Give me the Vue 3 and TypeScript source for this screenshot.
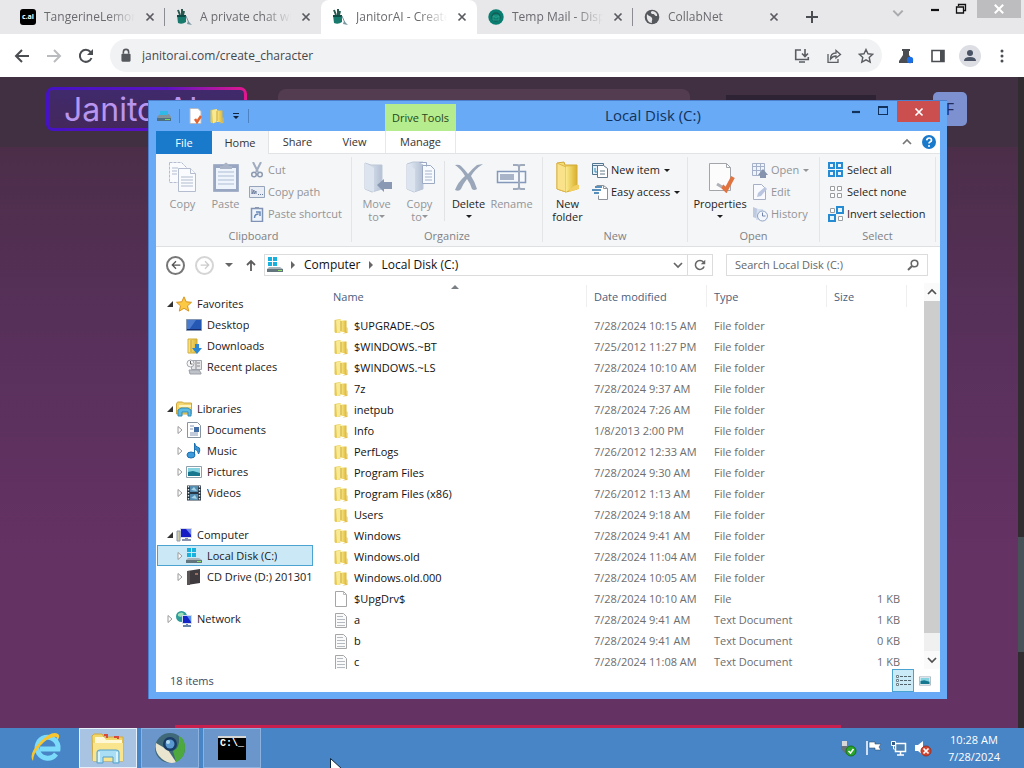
<script setup lang="ts">
import { ref } from 'vue'

interface Tab { title: string; icon: string; active?: boolean; line?: boolean }
interface NavItem { label: string; icon: string; level: number; arrow: 'open' | 'closed' | 'none'; gap?: boolean; selected?: boolean }
interface FileRow { name: string; date: string; type: string; size: string; icon: string }

const tabs: Tab[] = [
  { title: 'TangerineLemon', icon: 'cai', line: true },
  { title: 'A private chat with', icon: 'janitor' },
  { title: 'JanitorAI - Create', icon: 'janitor', active: true },
  { title: 'Temp Mail - Dispo', icon: 'mail', line: true },
  { title: 'CollabNet', icon: 'globe' },
]

const nav: NavItem[] = [
  { label: 'Favorites', icon: 'star', level: 0, arrow: 'open' },
  { label: 'Desktop', icon: 'desktop', level: 1, arrow: 'none' },
  { label: 'Downloads', icon: 'downloads', level: 1, arrow: 'none' },
  { label: 'Recent places', icon: 'recent', level: 1, arrow: 'none' },
  { label: 'Libraries', icon: 'libraries', level: 0, arrow: 'open', gap: true },
  { label: 'Documents', icon: 'documents', level: 1, arrow: 'closed' },
  { label: 'Music', icon: 'music', level: 1, arrow: 'closed' },
  { label: 'Pictures', icon: 'pictures', level: 1, arrow: 'closed' },
  { label: 'Videos', icon: 'videos', level: 1, arrow: 'closed' },
  { label: 'Computer', icon: 'computer', level: 0, arrow: 'open', gap: true },
  { label: 'Local Disk (C:)', icon: 'drive', level: 1, arrow: 'closed', selected: true },
  { label: 'CD Drive (D:) 201301', icon: 'cd', level: 1, arrow: 'closed' },
  { label: 'Network', icon: 'network', level: 0, arrow: 'closed', gap: true },
]

const folder = (name: string, date: string): FileRow => ({ name, date, type: 'File folder', size: '', icon: 'folder' })
const files: FileRow[] = [
  folder('$UPGRADE.~OS', '7/28/2024 10:15 AM'),
  folder('$WINDOWS.~BT', '7/25/2012 11:27 PM'),
  folder('$WINDOWS.~LS', '7/28/2024 10:10 AM'),
  folder('7z', '7/28/2024 9:37 AM'),
  folder('inetpub', '7/28/2024 7:26 AM'),
  folder('Info', '1/8/2013 2:00 PM'),
  folder('PerfLogs', '7/26/2012 12:33 AM'),
  folder('Program Files', '7/28/2024 9:30 AM'),
  folder('Program Files (x86)', '7/26/2012 1:13 AM'),
  folder('Users', '7/28/2024 9:18 AM'),
  folder('Windows', '7/28/2024 9:41 AM'),
  folder('Windows.old', '7/28/2024 11:04 AM'),
  folder('Windows.old.000', '7/28/2024 10:05 AM'),
  { name: '$UpgDrv$', date: '7/28/2024 10:10 AM', type: 'File', size: '1 KB', icon: 'file' },
  { name: 'a', date: '7/28/2024 9:41 AM', type: 'Text Document', size: '1 KB', icon: 'text' },
  { name: 'b', date: '7/28/2024 9:41 AM', type: 'Text Document', size: '0 KB', icon: 'text' },
  { name: 'c', date: '7/28/2024 11:08 AM', type: 'Text Document', size: '1 KB', icon: 'text' },
]

const apps = [
  { label: 'Internet Explorer', icon: 'ie', state: '' },
  { label: 'File Explorer', icon: 'explorer', state: 'current' },
  { label: 'Chromium', icon: 'chromium', state: 'running' },
  { label: 'Command Prompt', icon: 'cmd', state: 'running' },
]
const tray = ['usb', 'flag', 'lan', 'sound']

const url = ref('janitorai.com/create_character')
const search = ref('')
</script>

<template>
  <div class="screen">
    <svg class="sprite" aria-hidden="true">
      <defs>
        <linearGradient id="gFolder" x1="0" x2="1"><stop offset="0" stop-color="#fbe98c" /><stop offset="1" stop-color="#dcb532" /></linearGradient>
        <linearGradient id="gPale" x1="0" x2="1"><stop offset="0" stop-color="#e6edf5" /><stop offset="1" stop-color="#b3c0d4" /></linearGradient>
      </defs>
      <symbol id="x" viewBox="0 0 10 10"><path d="M1.5 1.5l7 7M8.5 1.5l-7 7" stroke="currentColor" stroke-width="1.7" /></symbol>
      <symbol id="janitor" viewBox="0 0 16 16"><path d="M1 6h9v7q-4 3-8 1z" fill="#187a6c" /><path d="M1 6h9v2H1z" fill="#0d4b47" /><path d="M2 1l2 5M6 0v6M8 2L7 6" stroke="#28584e" stroke-width="2" /><path d="M10 7l3 7" stroke="#7897a1" /><path d="M11 15l5 1-4-4z" fill="#7897a1" /></symbol>
      <symbol id="mail" viewBox="0 0 16 16"><circle cx="8" cy="8" r="7.700" fill="#087d70" /><circle cx="8" cy="8" r="4" fill="none" stroke="#155c58" stroke-width="1.500" /><path d="M5 7h6v4H5zM5 7l3 2 3-2" fill="none" stroke="#27a18b" /></symbol>
      <symbol id="globe" viewBox="0 0 16 16"><circle cx="8" cy="8" r="7.300" fill="#55585c" /><path d="M3 5c1 2 4 2 5 4s-1 3 0 5c-3 0-6-3-5-9zM8 2c-2 1-1 3 1 3s1 2 4 2c1-2-2-5-5-5z" fill="#e8e7ea" /></symbol>
      <symbol id="back" viewBox="0 0 16 16"><path d="M15 8H2M8 2L2 8l6 6" fill="none" stroke="currentColor" stroke-width="2" /></symbol>
      <symbol id="fwd" viewBox="0 0 16 16"><path d="M1 8h13M8 2l6 6-6 6" fill="none" stroke="currentColor" stroke-width="2" /></symbol>
      <symbol id="reload" viewBox="0 0 16 16"><path d="M13.500 10A6 6 0 1 1 12.500 4" fill="none" stroke="currentColor" stroke-width="2" /><path d="M15 1v6H9z" fill="currentColor" /></symbol>
      <symbol id="lock" viewBox="0 0 12 14"><rect x="2" y="5" width="8" height="7" rx="1" fill="#55585c" /><path d="M3.700 5V3.500a2.300 2.300 0 0 1 4.600 0V5" fill="none" stroke="#55585c" stroke-width="1.400" /></symbol>
      <symbol id="install" viewBox="0 0 16 16"><path d="M7 2H1.700v9.500h12.600V9M5 14h6M11 1v7M8 5.500l3 3 3-3" fill="none" stroke="#5a5d61" stroke-width="1.600" /></symbol>
      <symbol id="share" viewBox="0 0 16 16"><path d="M2 6v8.300h10V11M4.500 11c0-4 2-6 5.500-6V2.500L14.500 6.500 10 10V8c-3 0-4 1-5.500 3z" fill="none" stroke="#5a5d61" stroke-width="1.300" /></symbol>
      <symbol id="fav" viewBox="0 0 16 16"><path d="M8 1.500l2 4.300 4.700.5-3.500 3.200 1 4.700L8 11.800l-4.200 2.400 1-4.700L1.300 6.300 6 5.800z" fill="none" stroke="#5a5d61" stroke-width="1.400" /></symbol>
      <symbol id="flask" viewBox="0 0 16 16"><path d="M4 1h8v2h-1v4l4 6v2H1v-2l4-6V3H4z" fill="#4a4d52" /><circle cx="12" cy="12" r="3.200" fill="#1a6fe8" /></symbol>
      <symbol id="panel" viewBox="0 0 16 16"><path d="M2 2.500h12v11H2z" fill="none" stroke="#4a4d52" stroke-width="1.600" /><path d="M10 2h4v12h-4z" fill="#4a4d52" /></symbol>
      <symbol id="user" viewBox="0 0 22 22"><circle cx="11" cy="11" r="11" fill="#dcdee4" /><circle cx="11" cy="8" r="3" fill="#4a5364" /><path d="M5 16q0-4 6-4t6 4z" fill="#4a5364" /></symbol>
      <symbol id="dots" viewBox="0 0 16 16"><g fill="#4a4d52"><circle cx="8" cy="3" r="1.500" /><circle cx="8" cy="8" r="1.500" /><circle cx="8" cy="13" r="1.500" /></g></symbol>
      <symbol id="chev" viewBox="0 0 12 12"><path d="M2 4l4 4 4-4" fill="none" stroke="currentColor" stroke-width="1.700" /></symbol>
      <symbol id="min" viewBox="0 0 12 12"><path d="M2 7h8" stroke="currentColor" stroke-width="2.200" /></symbol>
      <symbol id="max" viewBox="0 0 12 12"><path d="M1 1h10v9H1zM2 3h8v6H2z" fill="currentColor" fill-rule="evenodd" /></symbol>
      <symbol id="restore" viewBox="0 0 12 12"><path d="M3.500 3V1.500h7v6H9M1.500 4h7v6h-7z" fill="none" stroke="currentColor" stroke-width="1.300" /></symbol>

      <symbol id="qdrive" viewBox="0 0 16 16"><path d="M1 9l3-3h9l2 3v4H1z" fill="#82939b" /><path d="M1 10h14v3H1z" fill="#4d7182" /><path d="M4 3h8v4H4z" fill="#30b9e6" /><path d="M9 11h5v1H9z" fill="#78d45b" /></symbol>
      <symbol id="drive" viewBox="0 0 16 16"><path d="M1 0h4v4H1zM6 0h4v4H6zM1 5h4v4H1zM6 5h4v4H6z" fill="#18b1de" /><path d="M2 10h11l3 2v3H0v-3z" fill="#a9b5bb" /><path d="M0 12h16v3H0z" fill="#63757d" /><path d="M11 13h4v1h-4z" fill="#8de35d" /></symbol>
      <symbol id="props" viewBox="0 0 16 16"><path d="M3 .5h8l3 3v12H3z" fill="#fff" stroke="#b5bcc6" /><path d="M8 11l2 3 4-6" fill="none" stroke="#df6632" stroke-width="2.500" /></symbol>
      <symbol id="folder" viewBox="0 0 16 16"><path d="M1.500 2l6-1v13.500l-5 .5-1-1z" fill="#e5c94f" /><path d="M3 2.500l5-1.500v12l-4 2.500z" fill="#f8e995" /><path d="M8 2.500h5.500V14H8z" fill="url(#gFolder)" /><path d="M8 3v10" stroke="#cba731" fill="none" /><path d="M13.500 9l1 1v5l-5 .5 4-2z" fill="#e3bf4b" /></symbol>
      <symbol id="file" viewBox="0 0 16 16"><path d="M2.500 .5h8l3 3v12h-11z" fill="#fff" stroke="#a6a6a6" /><path d="M10.500 .5v3h3" fill="none" stroke="#bbb" /></symbol>
      <symbol id="text" viewBox="0 0 16 16"><path d="M2.500 1.500h8l3 3v11h-11z" fill="#fafafa" stroke="#a6a6a6" /><path d="M4 4.500h6M4 7.500h8M4 10.500h8M4 13.500h8" stroke="#b4babf" /></symbol>
      <symbol id="star" viewBox="0 0 16 16"><path d="M8 .8l2.200 5 5.300.5-4 3.500 1.200 5.300L8 12.300l-4.700 2.800 1.200-5.300-4-3.500 5.300-.5z" fill="#fbc944" stroke="#d99420" /></symbol>
      <symbol id="desktop" viewBox="0 0 16 16"><path d="M.5 2.500h15v11H.5z" fill="#2557b5" stroke="#8496b2" /><path d="M1 3h9L3 13H1z" fill="#6493dc" opacity=".6" /><path d="M1 12h14v1H1z" fill="#162e71" /></symbol>
      <symbol id="downloads" viewBox="0 0 16 16"><path d="M2 1h9v14H2z" fill="url(#gFolder)" stroke="#d0ac3b" /><path d="M5 2v12" stroke="#c99f34" /><path d="M9 6h4v4h3l-5 6-5-6h3z" fill="#2b88d6" /></symbol>
      <symbol id="recent" viewBox="0 0 16 16"><path d="M5.500 1.500h10v9h-10z" fill="#e5e5e9" stroke="#a2a6ae" /><path d="M10 2v8M11 4h3M11 7h3" stroke="#888" /><circle cx="4.500" cy="4.500" r="3.500" fill="#f8f8fa" stroke="#a2a6ae" /><path d="M4.500 2v3h2" stroke="#666" fill="none" /><path d="M3 11h10l2 3v1H4z" fill="#bfc2c8" stroke="#9b9fa7" /></symbol>
      <symbol id="libraries" viewBox="0 0 16 16"><path d="M.5 3l1-2h5l1 1h8v11H.5z" fill="#f3d66d" stroke="#cda640" /><path d="M3 4h12v2H3z" fill="#fff3bf" /><path d="M2 15V9l3-2h7l3 2v6h-3v-4H6v4z" fill="#5bbbe5" stroke="#348bb5" /></symbol>
      <symbol id="documents" viewBox="0 0 16 16"><path d="M1.500 .5h10l3 3v12h-13z" fill="#fff" stroke="#8994a1" /><path d="M4 4h4M4 7h3M4 11h8M4 13h8" stroke="#8296b5" /><path d="M8 5h5v5H8z" fill="#416ca4" /></symbol>
      <symbol id="music" viewBox="0 0 16 16"><ellipse cx="5" cy="12" rx="4" ry="3" fill="#3d9adb" stroke="#1d70af" /><path d="M8.500 12V0q.5 4 5 5 1 3-1 6 0-4-4-5" fill="#3992d1" stroke="#1d70af" /></symbol>
      <symbol id="pictures" viewBox="0 0 16 16"><path d="M.5 2.500h15v11H.5z" fill="#fff" stroke="#8ca0ae" /><path d="M2 4h12v8H2z" fill="#85d2e0" /><path d="M2 8l5-1 7 2v3H2z" fill="#16778e" /></symbol>
      <symbol id="videos" viewBox="0 0 16 16"><path d="M1 .5h14v15H1z" fill="#293744" /><path d="M4 1h8v6H4zM4 9h8v6H4z" fill="#538eb2" /><path d="M2.500 1v15M13.500 1v15" stroke="#e4ecef" stroke-width="1.400" stroke-dasharray="1.500 1.500" /><path d="M5 5l3-3 3 4zM5 13l4-3 2 4z" fill="#a7d4e6" /></symbol>
      <symbol id="computer" viewBox="0 0 16 16"><path d="M4 1h12v10H4z" fill="#d7dbe7" /><path d="M5 2h10v8H5z" fill="#171bc4" /><path d="M10 2h5v6z" fill="#6f83f0" /><path d="M9 11h3v1h3v2H6v-2h3z" fill="#8890ac" /><path d="M1 4h3v10H1z" fill="#cfcba9" stroke="#8c99ac" /></symbol>
      <symbol id="cd" viewBox="0 0 16 16"><path d="M1 2l13-2v14L1 16z" fill="#3e3a3e" /><path d="M1 2h3v14H1z" fill="#5a5454" /><path d="M9 4h3v2H9z" fill="#9a7063" /></symbol>
      <symbol id="network" viewBox="0 0 16 16"><circle cx="5.500" cy="5.500" r="5.500" fill="#309c99" /><path d="M2 3q4-3 6 0l-3 3-3-1z" fill="#9ee0b9" /><path d="M6 4h10v9H6z" fill="#cfdbec" /><path d="M7 5h8v7H7z" fill="#1727c7" /><path d="M11 5h4v6z" fill="#5a91ed" /><path d="M10 13h2v1h3v2H7v-2h3z" fill="#6985a9" /></symbol>

      <symbol id="bCopy" viewBox="0 0 32 32"><g fill="#f9fbfe" stroke="#b3bdcf"><path d="M2.500 1.500h12l5 5v15h-17z" stroke-dasharray="3 1" /><path d="M11.500 7.500h12l5 5v18h-17z" /><path d="M23.500 7.500v5h5M14 16h12M14 19h12M14 22h12M14 25h12M5 7h6M5 10h5M5 13h5" /></g></symbol>
      <symbol id="bPaste" viewBox="0 0 32 32"><path d="M3.500 3.500h25v27h-25z" fill="#99a6c1" stroke="#a7b3ca" /><path d="M6 7h20v21H6z" fill="#eef4fc" /><path d="M10 5h3q3-7 6 0h3v3H10z" fill="#aab4c8" /><path d="M8 11h16M8 15h16M8 19h16M8 23h16" stroke="#aebbd2" /></symbol>
      <symbol id="bMove" viewBox="0 0 32 32"><path d="M4 2l6 2h11v24l-10 3-7-3z" fill="url(#gPale)" stroke="#bcc7d8" /><path d="M4 2l9 5v24l-9-3z" fill="#dce4ef" /><path d="M16 24l7-6v3h8v7h-8v3z" fill="#8a99b3" /></symbol>
      <symbol id="bCopyTo" viewBox="0 0 32 32"><path d="M3 3l6-2h10v27l-9 3-7-3z" fill="url(#gPale)" stroke="#bcc7d8" /><path d="M3 3l8 5v23l-8-3z" fill="#dce4ef" /><path d="M15.500 1.500h7v4M18.500 4.500h8l4 4v14h-12z" fill="#f7faff" stroke="#9ba9c3" /><path d="M21 10h7M21 13h7M21 16h7M21 19h7" stroke="#a7b4cb" /></symbol>
      <symbol id="bDelete" viewBox="0 0 32 32"><path d="M2 4q4-1 6 1 4 4 7 8 4-5 9-9l6-1Q22 8 18 15q4 6 6 13-3 2-5 0-2-6-5-10-4 5-6 10-2 3-6 1 3-8 10-14Q8 8 2 4z" fill="#9aa6b9" /></symbol>
      <symbol id="bRename" viewBox="0 0 32 32"><path d="M1.500 10.500h28v11h-28z" fill="#f5f8fc" stroke="#8398bb" stroke-width="1.500" /><path d="M4 13h14v6H4z" fill="#a9b4c8" /><path d="M23 5v22M17 4h4q2 0 2 2 0-2 2-2h4M17 28h4q2 0 2-2 0 2 2 2h4" fill="none" stroke="#9faabd" stroke-width="2" /></symbol>
      <symbol id="bFolder" viewBox="0 0 32 32"><path d="M5 2l7-1 1 3h12v24l-11 3-9-3z" fill="url(#gFolder)" stroke="#d3aa39" /><path d="M5 2l9 4v25l-9-3z" fill="#fae28a" stroke="#dcb74b" /><path d="M14 6l10-1v19l-10 7z" fill="url(#gFolder)" /><path d="M18 28q6-5 9-4v4l-10 3z" fill="#f1cf60" /></symbol>
      <symbol id="bProps" viewBox="0 0 32 32"><path d="M5.500 2.500h17l4 4v23h-21z" fill="#fcfcfc" stroke="#a2a6aa" /><path d="M22.500 2.500v4h4" fill="none" stroke="#a2a6aa" /><path d="M18 25l4 4 7-13" fill="none" stroke="#e0733f" stroke-width="4" /><path d="M13 23l5 3" stroke="#aeb2b8" stroke-width="3" /></symbol>

      <symbol id="cut" viewBox="0 0 16 16"><path d="M4 0l5 10M12 0L7 10" stroke="#a0acc0" stroke-width="2" /><circle cx="5" cy="12.500" r="2.300" fill="none" stroke="#8c9ab2" stroke-width="1.500" /><circle cx="11" cy="12.500" r="2.300" fill="none" stroke="#8c9ab2" stroke-width="1.500" /></symbol>
      <symbol id="path" viewBox="0 0 16 16"><path d="M.5 2.500h15v11H.5z" fill="#e8edf5" stroke="#95a3bb" /><path d="M3 5v5l2-4v4l2-3v3M9 10.500h1M11 10.500h1M13 10.500h1" stroke="#6a7b9b" fill="none" /></symbol>
      <symbol id="shortcut" viewBox="0 0 16 16"><path d="M2.500 2.500h11v13h-11z" fill="#eff5fd" stroke="#8093b4" stroke-width="1.500" /><path d="M6 1h4v2H6z" fill="#8b99b1" /><path d="M5.500 12q0-4 4-4M7 6h4v4" fill="none" stroke="#6888b7" stroke-width="1.500" /></symbol>
      <symbol id="newitem" viewBox="0 0 16 16"><path d="M.5 1.500h11v11H.5zM.5 3.500h11" fill="#e4eff7" stroke="#51748f" /><path d="M3 6v4h3" stroke="#308abb" fill="none" /><path d="M5.500 3.500h6l4 3v9h-10zM8 9h5M8 12h5" fill="#fff" stroke="#637989" /></symbol>
      <symbol id="easy" viewBox="0 0 16 16"><path d="M4.500 1.500h7l4 3v11h-9v-4" fill="#fff" stroke="#8b9299" /><path d="M11.500 1.500v3h4" fill="none" stroke="#8b9299" /><path d="M3 3h7M0 6h9M2 9h5" stroke="#246fa8" stroke-width="1.500" /></symbol>
      <symbol id="open" viewBox="0 0 16 16"><path d="M.5 1.500h12v12H.5zM.5 4.500h12M4.500 2v11M8.500 2v11M1 8.500h12" fill="#eff3fa" stroke="#a4b1c8" /><path d="M8 16v-3H6l5-6 5 6h-2v3z" fill="#8593ad" /></symbol>
      <symbol id="edit" viewBox="0 0 16 16"><path d="M1.500 .5h8l4 4v11h-12z" fill="#f8faff" stroke="#a6afc3" /><path d="M5 13l1-4 7-6 2 2-6 7z" fill="#bac5df" /></symbol>
      <symbol id="history" viewBox="0 0 16 16"><path d="M1 1l5 2v10l-5-2z" fill="#bdcae0" /><path d="M5 3h6v11H4z" fill="#d7e0ef" /><circle cx="10.500" cy="10" r="5" fill="#f3f7fd" stroke="#91a4c4" /><path d="M10.500 6.500V10h3" fill="none" stroke="#7185aa" /></symbol>
      <symbol id="selAll" viewBox="0 0 16 16"><path d="M0 0h7v7H0zM8 0h7v7H8zM0 8h7v7H0zM8 8h7v7H8z" fill="#268bd2" /><path d="M2 2h3v3H2zM10 2h3v3h-3zM2 10h3v3H2zM10 10h3v3h-3z" fill="#e6f5ff" /></symbol>
      <symbol id="selNone" viewBox="0 0 16 16"><g fill="#fff" stroke="#9a9ea2"><path d="M2.500 2.500h4v4h-4zM9.500 2.500h4v4h-4zM2.500 9.500h4v4h-4zM9.500 9.500h4v4h-4z" /></g></symbol>
      <symbol id="selInv" viewBox="0 0 16 16"><path d="M9 1h6v6H9zM1 9h6v6H1z" fill="#e7f5ff" stroke="#268bd2" stroke-width="2" /><path d="M2.500 2.500h4v4h-4zM10.500 10.500h4v4h-4z" fill="#fff" stroke="#9a9ea2" /></symbol>
      <symbol id="help" viewBox="0 0 14 14"><circle cx="7" cy="7" r="7" fill="#1979ca" /><path d="M4.700 5.300Q5 3 7.200 3T9.500 5.200Q9.500 6.300 8 7 7 7.500 7 8.600" fill="none" stroke="#fff" stroke-width="1.700" /><circle cx="7" cy="11" r="1" fill="#fff" /></symbol>
      <symbol id="details" viewBox="0 0 16 16"><path d="M1.500 2.500h2v2h-2zM1.500 6.500h2v2h-2zM1.500 10.500h2v2h-2z" fill="#fff" stroke="#6f7f87" /><path d="M5 3.500h3M9 3.500h3M13 3.500h3M5 7.500h3M9 7.500h3M13 7.500h3M5 11.500h3M9 11.500h3M13 11.500h3" stroke="#53636c" /></symbol>

      <symbol id="ie" viewBox="0 0 32 32"><path d="M26 22A10.500 10.500 0 1 1 28 17H10" fill="none" stroke="#7cdbfa" stroke-width="5" /><path d="M3 29Q-2 22 10 10T28 2q3 2-1 7 1-5-3-4-7 1-14 9T3 29z" fill="#f7c631" /></symbol>
      <symbol id="explorer" viewBox="0 0 34 32"><path d="M1 4l2-2h8l2 3h19v24H2z" fill="#f1d669" stroke="#cfa940" /><path d="M4 5h9l2 3h16v3H4z" fill="#fff8d7" /><path d="M13 3h3v3M23 5h4v2" stroke="#d84a39" stroke-width="2" fill="none" /><path d="M2 11h30v18H2z" fill="#f8e58e" /><path d="M6 31V20q0-2 3-2h16q3 0 3 2v11h-6v-6H12v6z" fill="#a9def5" stroke="#559fc9" /><path d="M8 20v10M26 20v10" stroke="#d9f4ff" stroke-width="2" /></symbol>
      <symbol id="chromium" viewBox="0 0 32 32"><circle cx="16" cy="16" r="15" fill="#3f6878" /><path d="M2 11q-2 10 6 16t14 3l-8-12z" fill="#e9e5cf" /><path d="M22 30q9-4 9-14T25 4q1 13-6 15z" fill="#4da83e" /><circle cx="16" cy="12" r="7" fill="#183b68" /><circle cx="16" cy="12" r="4.500" fill="#5999cf" /><circle cx="14" cy="10" r="2" fill="#b5daef" /></symbol>
      <symbol id="usb" viewBox="0 0 18 18"><path d="M3 2h5v5H3z" fill="#d7d8da" /><path d="M2 7h8l3 5-5 4-6-6z" fill="#68727a" /><circle cx="12" cy="12" r="5" fill="#2aa62c" stroke="#16751a" /><path d="M9.500 12l2 2 3-4" fill="none" stroke="#fff" stroke-width="1.500" /></symbol>
      <symbol id="flag" viewBox="0 0 18 18"><path d="M3 2v14" stroke="#fff" stroke-width="1.500" /><path d="M5 3h6v2h6l-2 3 2 3h-6V9H5z" fill="#fff" stroke="#355574" stroke-width=".6" /></symbol>
      <symbol id="lan" viewBox="0 0 18 18"><path d="M6.500 4.500h10v8h-10zM11.500 13v3M8 16h7" fill="#4e82b4" stroke="#fff" stroke-width="1.500" /><path d="M2.500 2.500h4v4h-4zM4.500 7v3h2" fill="#355c87" stroke="#fff" /></symbol>
      <symbol id="sound" viewBox="0 0 18 18"><path d="M1 6h3l5-4v14l-5-4H1z" fill="#fff" /><circle cx="12" cy="12" r="5" fill="#d5442f" stroke="#94352a" /><path d="M9.500 9.500l5 5M14.500 9.500l-5 5" stroke="#fff" stroke-width="1.700" /></symbol>
    </svg>

    <section class="browser">
      <div class="strip">
        <div v-for="t in tabs" :key="t.title" class="tab" :class="{ active: t.active, line: t.line }">
          <span v-if="t.icon === 'cai'" class="cai">c.ai</span>
          <svg v-else class="i16"><use :href="'#' + t.icon" /></svg>
          <span class="tab-title">{{ t.title }}</span>
          <button class="plain" aria-label="Close tab"><svg class="i10"><use href="#x" /></svg></button>
        </div>
        <button class="plain plus" aria-label="New tab"><svg viewBox="0 0 14 14"><path d="M7 1v12M1 7h12" stroke="#4a4d52" stroke-width="2" /></svg></button>
        <div class="chrome-ctl">
          <button class="plain chev" aria-label="Search tabs"><svg class="i14"><use href="#chev" /></svg></button>
          <button class="plain" aria-label="Minimize"><svg class="i12"><use href="#min" /></svg></button>
          <button class="plain" aria-label="Restore"><svg class="i12"><use href="#restore" /></svg></button>
          <button class="plain chrome-x" aria-label="Close"><svg class="i12"><use href="#x" /></svg></button>
        </div>
      </div>
      <div class="toolbar">
        <button class="plain" aria-label="Back"><svg class="i16"><use href="#back" /></svg></button>
        <button class="plain off" aria-label="Forward"><svg class="i16"><use href="#fwd" /></svg></button>
        <button class="plain" aria-label="Reload"><svg class="i16"><use href="#reload" /></svg></button>
        <div class="omni">
          <svg class="i16"><use href="#lock" /></svg>
          <input v-model="url" aria-label="Address">
          <button class="plain" aria-label="Install"><svg class="i16"><use href="#install" /></svg></button>
          <button class="plain" aria-label="Share"><svg class="i16"><use href="#share" /></svg></button>
          <button class="plain" aria-label="Bookmark"><svg class="i16"><use href="#fav" /></svg></button>
        </div>
        <button class="plain" aria-label="Experiments"><svg class="i16"><use href="#flask" /></svg></button>
        <button class="plain" aria-label="Side panel"><svg class="i16"><use href="#panel" /></svg></button>
        <button class="plain profile" aria-label="Profile"><svg class="i22"><use href="#user" /></svg></button>
        <button class="plain" aria-label="Menu"><svg class="i16"><use href="#dots" /></svg></button>
      </div>
      <main class="page">
        <div class="site">
          <header class="site-head">
            <div class="logo">JanitorAI</div>
            <div class="site-search"></div>
            <div class="site-btn"></div>
            <div class="avatar">F</div>
          </header>
          <div class="site-foot"></div>
        </div>
        <div class="site-scroll"><div class="site-thumb"></div></div>
      </main>
    </section>

    <section class="window">
      <header class="titlebar">
        <div class="quick">
          <svg class="i16"><use href="#qdrive" /></svg><i></i>
          <button class="plain" aria-label="Properties"><svg class="i16"><use href="#props" /></svg></button>
          <button class="plain" aria-label="New folder"><svg class="i16"><use href="#folder" /></svg></button>
          <button class="plain" aria-label="Customize"><svg class="i10" viewBox="0 0 10 10"><path d="M2 2h6v1H2zM2 5h6L5 8z" fill="#102440" /></svg></button><i></i>
        </div>
        <div class="context">Drive Tools</div>
        <h1>Local Disk (C:)</h1>
        <div class="win-ctl">
          <button class="plain" aria-label="Minimize"><svg class="i12"><use href="#min" /></svg></button>
          <button class="plain" aria-label="Maximize"><svg class="i12"><use href="#max" /></svg></button>
          <button class="plain win-x" aria-label="Close"><svg class="i10"><use href="#x" /></svg></button>
        </div>
      </header>

      <div class="client">
        <nav class="ribbon-tabs">
          <button class="rtab file-tab">File</button>
          <button class="rtab home">Home</button>
          <button class="rtab">Share</button>
          <button class="rtab">View</button>
          <button class="rtab manage">Manage</button>
          <button class="plain collapse" aria-label="Collapse ribbon"><svg class="i12"><use href="#chev" /></svg></button>
          <button class="plain" aria-label="Help"><svg class="i14"><use href="#help" /></svg></button>
        </nav>

        <div class="ribbon">
          <div class="group g-clip">
            <div class="cmds">
              <button class="big dim"><svg><use href="#bCopy" /></svg>Copy</button>
              <button class="big dim"><svg><use href="#bPaste" /></svg>Paste</button>
              <div class="col">
                <button class="small dim"><svg><use href="#cut" /></svg>Cut</button>
                <button class="small dim"><svg><use href="#path" /></svg>Copy path</button>
                <button class="small dim"><svg><use href="#shortcut" /></svg>Paste shortcut</button>
              </div>
            </div>
            <div class="caption">Clipboard</div>
          </div>
          <div class="group g-org">
            <div class="cmds">
              <button class="big dim"><svg><use href="#bMove" /></svg>Move<span>to<b></b></span></button>
              <button class="big dim"><svg><use href="#bCopyTo" /></svg>Copy<span>to<b></b></span></button>
              <i class="sep"></i>
              <button class="big"><svg><use href="#bDelete" /></svg>Delete<span><b></b></span></button>
              <button class="big dim"><svg><use href="#bRename" /></svg>Rename</button>
            </div>
            <div class="caption">Organize</div>
          </div>
          <div class="group g-new">
            <div class="cmds">
              <button class="big"><svg><use href="#bFolder" /></svg>New<span>folder</span></button>
              <div class="col">
                <button class="small"><svg><use href="#newitem" /></svg>New item<b></b></button>
                <button class="small"><svg><use href="#easy" /></svg>Easy access<b></b></button>
              </div>
            </div>
            <div class="caption">New</div>
          </div>
          <div class="group g-open">
            <div class="cmds">
              <button class="big wide"><svg><use href="#bProps" /></svg>Properties<span><b></b></span></button>
              <div class="col">
                <button class="small dim"><svg><use href="#open" /></svg>Open<b></b></button>
                <button class="small dim"><svg><use href="#edit" /></svg>Edit</button>
                <button class="small dim"><svg><use href="#history" /></svg>History</button>
              </div>
            </div>
            <div class="caption">Open</div>
          </div>
          <div class="group g-sel">
            <div class="cmds">
              <div class="col">
                <button class="small"><svg><use href="#selAll" /></svg>Select all</button>
                <button class="small"><svg><use href="#selNone" /></svg>Select none</button>
                <button class="small"><svg><use href="#selInv" /></svg>Invert selection</button>
              </div>
            </div>
            <div class="caption">Select</div>
          </div>
        </div>

        <div class="address">
          <button class="plain round" aria-label="Back"><svg class="i10"><use href="#back" /></svg></button>
          <button class="plain round faded" aria-label="Forward"><svg class="i10"><use href="#fwd" /></svg></button>
          <button class="plain hist" aria-label="Recent locations"><b></b></button>
          <button class="plain up" aria-label="Up"><svg class="i12" viewBox="0 0 12 12"><path d="M6 12V2M2 6l4-4 4 4" fill="none" stroke="#5c5c5c" stroke-width="1.800" /></svg></button>
          <div class="crumbs">
            <svg class="i16"><use href="#drive" /></svg>
            <em></em><span>Computer</span><em></em><span>Local Disk (C:)</span>
            <button class="plain drop" aria-label="Previous locations"><svg class="i12"><use href="#chev" /></svg></button>
          </div>
          <button class="plain refresh" aria-label="Refresh"><svg class="i12"><use href="#reload" /></svg></button>
          <div class="search">
            <input v-model="search" aria-label="Search" placeholder="Search Local Disk (C:)">
            <svg class="i12" viewBox="0 0 12 12"><circle cx="7.500" cy="4.500" r="3.300" fill="none" stroke="#666" stroke-width="1.600" /><path d="M5 7l-4 4" stroke="#666" stroke-width="2" /></svg>
          </div>
        </div>

        <div class="body">
          <ul class="tree">
            <li v-for="n in nav" :key="n.label" :class="['lv' + n.level, { gap: n.gap, selected: n.selected }]">
              <span class="arrow">
                <svg v-if="n.arrow === 'open'" viewBox="0 0 8 8"><path d="M7 1v6H1z" fill="#333" /></svg>
                <svg v-else-if="n.arrow === 'closed'" viewBox="0 0 8 8"><path d="M2 .5L6 4 2 7.500z" fill="#fff" stroke="#9a9a9a" /></svg>
              </span>
              <svg class="i16"><use :href="'#' + n.icon" /></svg>
              <span class="nav-label">{{ n.label }}</span>
            </li>
          </ul>
          <div class="list">
            <table>
              <colgroup><col><col class="c-date"><col class="c-type"><col class="c-size"></colgroup>
              <thead>
                <tr>
                  <th>Name<svg class="sort" viewBox="0 0 8 4"><path d="M0 4l4-4 4 4z" fill="#7a7f85" /></svg></th>
                  <th>Date modified</th><th>Type</th><th>Size</th>
                </tr>
              </thead>
              <tbody>
                <tr v-for="f in files" :key="f.name">
                  <td class="name"><span><svg class="i16"><use :href="'#' + f.icon" /></svg>{{ f.name }}</span></td>
                  <td>{{ f.date }}</td>
                  <td>{{ f.type }}</td>
                  <td class="size">{{ f.size }}</td>
                </tr>
              </tbody>
            </table>
          </div>
          <div class="scroll">
            <button class="plain sup" aria-label="Scroll up"><svg class="i12"><use href="#chev" /></svg></button>
            <div class="thumb"></div>
            <button class="plain" aria-label="Scroll down"><svg class="i12"><use href="#chev" /></svg></button>
          </div>
        </div>

        <footer class="status">
          <span>18 items</span>
          <button class="view on" aria-label="Details view"><svg class="i16"><use href="#details" /></svg></button>
          <button class="view" aria-label="Large icons view"><svg class="i12"><use href="#pictures" /></svg></button>
        </footer>
      </div>
    </section>

    <footer class="taskbar">
      <button v-for="a in apps" :key="a.label" class="app" :class="a.state" :aria-label="a.label">
        <span v-if="a.icon === 'cmd'" class="cmd">C:\_</span>
        <svg v-else><use :href="'#' + a.icon" /></svg>
      </button>
      <div class="tray">
        <button v-for="t in tray" :key="t" class="plain" :aria-label="t"><svg class="i18"><use :href="'#' + t" /></svg></button>
        <div class="clock"><span>10:28 AM</span><span>7/28/2024</span></div>
      </div>
    </footer>
    <svg class="cursor" viewBox="0 0 12 18"><path d="M.5 .5v15l4-4 2.500 6 2.500-1-2.500-5.500H12z" fill="#fff" stroke="#10243c" /></svg>
  </div>
</template>

<style>
html, body { overflow: hidden; }
</style>

<style scoped>
* { box-sizing: border-box; }
.screen { position: relative; height: 100vh; display: flex; flex-direction: column; overflow: hidden; font: 11px/16px "Open Sans", "Noto Sans", sans-serif; color: #1e1e1e; }
.sprite { position: absolute; width: 0; height: 0; }
svg { flex: none; display: block; }
button, input { font: inherit; color: inherit; }
button { border: 0; background: none; padding: 0; margin: 0; white-space: nowrap; }
.plain { display: flex; align-items: center; justify-content: center; flex: none; }
.i10 { width: 10px; height: 10px; }
.i12 { width: 12px; height: 12px; }
.i14 { width: 14px; height: 14px; }
.i16 { width: 16px; height: 16px; }
.i18 { width: 18px; height: 18px; }
.i22 { width: 22px; height: 22px; }

.browser { flex: 1; display: flex; flex-direction: column; min-height: 0; }
.strip { display: flex; height: 34px; padding-left: 9px; background: #e8e7ea; flex: none; }
.tab { flex: 0 1 156px; min-width: 0; display: flex; align-items: center; gap: 8px; padding: 0 8px 0 11px; color: #6a6b6f; font-size: 12px; position: relative; }
.tab.line::after { content: ""; position: absolute; right: 0; top: 8px; width: 1px; height: 18px; background: #8c8d92; }
.tab.active { background: #fff; border-radius: 8px 8px 0 0; }
.tab-title { flex: 1; min-width: 0; overflow: hidden; white-space: nowrap; mask-image: linear-gradient(90deg, #000 70%, transparent); }
.tab .plain { width: 14px; color: #5a5b60; }
.cai { flex: none; width: 16px; height: 16px; border-radius: 3px; background: #000; color: #fff; font-size: 7px; font-weight: 700; line-height: 15px; text-align: center; }
.plus { width: 28px; margin-left: 9px; }
.plus svg { width: 14px; height: 14px; }
.chrome-ctl { display: flex; margin-left: auto; gap: 14px; align-items: flex-start; color: #111; padding-right: 3px; }
.chrome-ctl .plain { height: 18px; width: 12px; }
.chrome-ctl .chev { height: 26px; width: 14px; margin-right: 10px; color: #a9aaad; }
.chrome-ctl .chrome-x { width: 44px; background: #bdbdbf; color: #fff; margin-left: -4px; }
.toolbar { display: flex; align-items: center; height: 43px; gap: 16px; padding: 0 14px; background: #fff; flex: none; color: #4a4d52; }
.toolbar .off { color: #babbbe; }
.profile { margin: 0 -3px; }
.omni { flex: 1; display: flex; align-items: center; height: 33px; border-radius: 17px; background: #f1f2f4; padding: 0 8px; gap: 16px; }
.omni input { flex: 1; min-width: 0; border: 0; background: none; outline: 0; font-size: 12px; color: #45474b; margin-left: -8px; padding: 0; }
.page { flex: 1; display: flex; min-height: 0; }
.site { flex: 1; display: flex; flex-direction: column; background: linear-gradient(#472d42, #57305a 38%, #653264 75%); }
.site-head { height: 70px; display: flex; align-items: flex-start; padding: 10px 51px 0 46px; background: #403042; }
.logo { width: 201px; height: 44px; border: 3px solid transparent; border-radius: 7px; padding: 0 15px; background: linear-gradient(#402a6c, #44285c) padding-box, linear-gradient(90deg, #4512c4, #5b14c4 60%, #e3188e) border-box; color: #b895ee; font: 32px/40px Inter, sans-serif; }
.site-search { margin: 2px 0 0 31px; flex: 0 1 412px; height: 40px; border-radius: 8px; background: #533c4f; }
.site-btn { margin: 8px 0 0 36px; flex: 0 1 150px; height: 34px; background: #2e2235; }
.avatar { margin: 5px 0 0 auto; width: 34px; height: 34px; border-radius: 5px; background: #7d90d0; color: #232c5c; text-align: center; font-size: 16px; line-height: 34px; }
.site-foot { margin: auto 177px 0 175px; height: 3px; background: #c71f4e; }
.site-scroll { width: 6px; background: #302c30; padding-top: 460px; }
.site-thumb { height: 115px; background: #465257; }

.window { position: absolute; inset: 100px 77px 69px 148px; display: flex; flex-direction: column; background: #68aaf6; padding: 0 7px 7px; border: 1px solid #4d80cc; border-width: 1px 0 0 1px; }
.titlebar { display: flex; height: 30px; flex: none; color: #12325c; }
.quick { flex: 0 0 229px; display: flex; align-items: center; gap: 6px; }
.quick i { width: 1px; height: 14px; background: #4c83c4; margin: 0 1px; }
.context { flex: 0 0 71px; margin-top: 3px; background: #b5ec8e; color: #27471c; text-align: center; line-height: 27px; }
.titlebar h1 { flex: 1; margin: 0; text-align: center; font-weight: 400; font-size: 15px; line-height: 29px; }
.win-ctl { display: flex; align-items: flex-start; gap: 15px; }
.win-ctl .plain { height: 20px; }
.win-ctl .win-x { width: 43px; height: 21px; background: #cc4f50; color: #fff; margin-left: -7px; }
.client { flex: 1; display: flex; flex-direction: column; min-height: 0; background: #fff; }
.ribbon-tabs { display: flex; height: 23px; flex: none; align-items: stretch; border-bottom: 1px solid #e2e3e4; padding-right: 4px; }
.rtab { width: 57px; flex: none; line-height: 22px; color: #333; }
.file-tab { width: 56px; background: #1979ca; color: #fff; margin-bottom: -1px; }
.home { background: #f5f6f7; border-right: 1px solid #e2e3e4; margin-bottom: -1px; }
.manage { width: 71px; border: 1px solid #e2eddc; border-width: 0 1px; margin-left: 2px; }
.collapse { margin-left: auto; margin-right: 9px; color: #777; }
.collapse svg, .sup svg { transform: rotate(180deg); }
.ribbon { display: flex; height: 93px; flex: none; background: #f5f6f7; border-bottom: 1px solid #dfe0e1; padding-top: 3px; }
.group { display: flex; flex-direction: column; border-right: 1px solid #e4e5e6; margin-bottom: 4px; }
.g-clip { flex: 0 0 196px; }
.g-org { flex: 0 0 191px; }
.g-new { flex: 0 0 145px; }
.g-open { flex: 0 0 132px; }
.g-sel { flex: 0 0 116px; }
.cmds { display: flex; flex: 1; min-height: 0; align-items: flex-start; padding-left: 3px; }
.g-clip .cmds { padding-left: 5px; }
.g-sel .cmds { padding-left: 6px; }
.caption { text-align: center; color: #7f8184; line-height: 12px; }
.big { width: 43px; display: flex; flex-direction: column; align-items: center; line-height: 13px; padding-top: 4px; }
.big svg { width: 32px; height: 32px; margin-bottom: 4px; }
.wide { width: 58px; }
.g-new .col, .g-open .col { margin-left: 3px; }
.sep { width: 1px; height: 60px; background: #e2e3e4; margin: 4px 2px 0 3px; }
.big span { display: flex; align-items: center; min-height: 13px; }
b { display: inline-block; border: 3px solid transparent; border-top-color: currentColor; border-bottom: 0; margin-left: 3px; }
.big span b:first-child { margin-left: 0; }
.dim { color: #929497; }
.col { display: flex; flex-direction: column; margin-left: 2px; padding-top: 2px; }
.small { display: flex; align-items: center; height: 22px; gap: 3px; line-height: 22px; }
.small svg { width: 16px; height: 16px; }
.small b { margin-left: 1px; }

.address { display: flex; align-items: center; height: 36px; flex: none; padding: 0 12px 0 10px; }
.round { width: 19px; height: 19px; border: 2px solid #777; border-radius: 50%; color: #555; margin-right: 10px; }
.faded { border-color: #d5d5d5; color: #ccc; }
.hist { width: 10px; color: #666; margin-right: 4px; }
.hist b { margin: 0; border-width: 4px 4px 0; }
.up { width: 26px; height: 22px; }
.crumbs { flex: 1; display: flex; align-items: center; height: 22px; border: 1px solid #dcdcdc; padding-left: 2px; font-size: 12px; color: #111; min-width: 0; white-space: nowrap; }
.crumbs em { border: 4px solid transparent; border-left-color: #666; border-right: 0; margin: 0 9px 0 8px; flex: none; }
.drop { width: 18px; margin-left: auto; color: #666; }
.refresh { width: 25px; height: 22px; border: 1px solid #dcdcdc; border-left: 0; color: #666; }
.search { flex: 0 1 202px; display: flex; align-items: center; height: 22px; margin-left: 13px; border: 1px solid #dcdcdc; padding: 0 8px; }
.search input { flex: 1; min-width: 0; border: 0; outline: 0; padding: 0; background: none; }
.search input::placeholder { color: #666; opacity: 1; }

.body { flex: 1; display: flex; min-height: 0; overflow: hidden; }
.tree { flex: 0 0 169px; margin: 0; padding: 10px 12px 0 1px; list-style: none; overflow: hidden; color: #1a1a1a; }
.tree li { display: flex; align-items: center; height: 21px; border: 1px solid transparent; padding-left: 8px; }
.tree li.lv1 { padding-left: 18px; }
.tree li.gap { margin-top: 21px; }
.tree li.selected { background: #cbe8f6; border-color: #4aa3d0; }
.arrow { flex: 0 0 8px; margin-right: 2px; }
.arrow svg { width: 8px; height: 8px; }
.nav-label { margin-left: 5px; overflow: hidden; white-space: nowrap; }
.list { flex: 1; min-width: 0; overflow: hidden; padding: 2px 17px 0 0; }
table { width: 100%; border-collapse: collapse; table-layout: fixed; }
.c-date, .c-type { width: 120px; }
.c-size { width: 80px; }
th { position: relative; height: 30px; padding: 0 7px 6px; font-weight: 400; text-align: left; color: #4c607a; background: linear-gradient(#efefef, #efefef) right top / 1px 22px no-repeat; }
th:first-child, td.name { padding-left: 8px; }
.sort { position: absolute; left: 48%; top: 0; width: 8px; height: 4px; }
td { height: 21px; padding: 0 7px; color: #6d6d6d; white-space: nowrap; }
td.name span { display: flex; align-items: center; gap: 5px; color: #111; }
td.size { text-align: right; }
.scroll { flex: 0 0 16px; display: flex; flex-direction: column; background: #f0f0f0; color: #505050; }
.scroll .plain { height: 18px; background: #fafafa; }
.thumb { flex: 0 1 86%; background: #cdcdcd; margin-bottom: auto; }
.status { display: flex; height: 23px; flex: none; align-items: center; padding: 0 4px 0 14px; color: #394b63; }
.status span { flex: 1; }
.view { width: 22px; height: 23px; display: flex; align-items: center; justify-content: center; }
.view.on { background: #cbeaf8; border: 1px solid #4aa3d0; }

.taskbar { height: 40px; flex: none; display: flex; background: #4785c6; padding-left: 17px; gap: 4px; }
.app { width: 58px; display: flex; align-items: center; justify-content: center; border: 1px solid transparent; }
.app svg { width: 34px; height: 32px; }
.app.running { background: #6a96cc; border-color: #8db2dd; }
.app.current { background: #a9c4e3; border-color: #e6f0fa; }
.cmd { width: 28px; height: 24px; border-top: 2px solid #d6d6d6; background: #000; color: #fff; font: 700 10px/12px "Liberation Mono", monospace; text-align: left; padding-left: 2px; }
.tray { margin-left: auto; display: flex; align-items: center; gap: 7px; color: #fff; padding-right: 24px; }
.clock { display: flex; flex-direction: column; align-items: center; margin-left: 9px; line-height: 17px; }
.cursor { position: absolute; left: 330px; top: 758px; width: 12px; height: 18px; }
</style>
